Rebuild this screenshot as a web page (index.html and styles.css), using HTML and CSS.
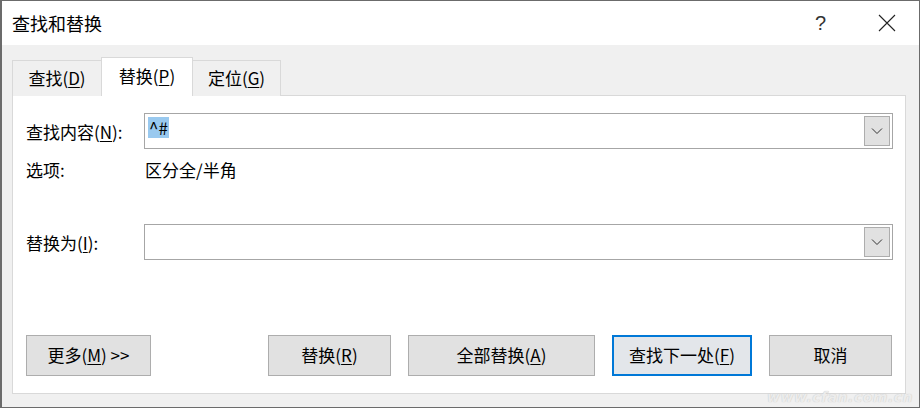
FILE: index.html
```html
<!DOCTYPE html>
<html lang="zh-CN">
  <head>
    <meta charset="UTF-8" />
    <title>查找和替换</title>
    <link rel="stylesheet" href="styles.css">
  </head>
  <body>
    <div class="dialog">
      <div class="titlebar">
        <span class="title">查找和替换</span>
        <span class="help">?</span>
        <span class="close">
          <svg width="18" height="18" viewBox="0 0 18 18"><path d="M1 1 L17 17 M17 1 L1 17" stroke="#222" stroke-width="1.1" fill="none"/></svg>
        </span>
      </div>
      <div class="client">
        <div class="tabs">
          <div class="tab">查找(<u>D</u>)</div>
          <div class="tab active">替换(<u>P</u>)</div>
          <div class="tab">定位(<u>G</u>)</div>
        </div>
        <div class="panel">
          <div class="row">
            <label class="label">查找内容(<u>N</u>):</label>
            <div class="combo">
              <span class="value"><span class="sel">^#</span></span>
              <span class="drop">
                <svg width="12" height="8" viewBox="0 0 12 8"><path d="M1 1.5 L6 6.5 L11 1.5" stroke="#333" stroke-width="1" fill="none"/></svg>
              </span>
            </div>
          </div>
          <div class="row options">
            <span class="label">选项:</span>
            <span class="opt-value">区分全/半角</span>
          </div>
          <div class="row replace">
            <label class="label">替换为(<u>I</u>):</label>
            <div class="combo">
              <span class="value"></span>
              <span class="drop">
                <svg width="12" height="8" viewBox="0 0 12 8"><path d="M1 1.5 L6 6.5 L11 1.5" stroke="#333" stroke-width="1" fill="none"/></svg>
              </span>
            </div>
          </div>
          <div class="buttons">
            <button class="btn more">更多(<u>M</u>) &gt;&gt;</button>
            <span class="spacer"></span>
            <button class="btn w123">替换(<u>R</u>)</button>
            <button class="btn wide">全部替换(<u>A</u>)</button>
            <button class="btn default">查找下一处(<u>F</u>)</button>
            <button class="btn w123">取消</button>
          </div>
        </div>
        <div class="watermark">www.cfan.com.cn</div>
      </div>
    </div>
  </body>
</html>
```

FILE: styles.css
```css
body {
  margin: 0;
  width: 920px;
  height: 408px;
  background: #ffffff;
  font-family: "Noto Sans CJK SC", "Noto Sans", sans-serif;
  color: #000;
  overflow: hidden;
}

u {
  text-decoration: underline;
  text-underline-offset: 2px;
  text-decoration-thickness: 1px;
}

.dialog {
  width: 917px;
  height: 406px;
  border: 1px solid #6b6b6b;
  border-left-width: 2px;
  display: flex;
  flex-direction: column;
}

.titlebar {
  height: 44px;
  flex-shrink: 0;
  background: #ffffff;
  display: flex;
  align-items: center;
  padding-left: 10px;
}

.title {
  font-size: 18px;
  flex: 1;
}

.help {
  font-size: 20px;
  font-family: "Liberation Sans", sans-serif;
  color: #333;
  margin-right: 52px;
}

.close {
  display: flex;
  margin-right: 23px;
}

.client {
  flex: 1;
  background: #f0f0f0;
  padding: 13px 11px 0 10px;
  position: relative;
}

.tabs {
  display: flex;
  align-items: flex-end;
  height: 38px;
  position: relative;
  z-index: 2;
  margin-bottom: -1px;
}

.tab {
  height: 36px;
  padding-bottom: 3px;
  box-sizing: border-box;
  border: 1px solid #d9d9d9;
  border-bottom: none;
  background: #f0f0f0;
  font-size: 17px;
  display: flex;
  align-items: center;
  justify-content: center;
}

.tab:first-child {
  width: 90px;
}

.tab:last-child {
  width: 88px;
  border-left: none;
}

.tab.active {
  width: 92px;
  height: 39px;
  background: #ffffff;
  margin-left: -1px;
  padding-bottom: 4px;
}

.panel {
  width: 894px;
  height: 299px;
  box-sizing: border-box;
  background: #ffffff;
  border: 1px solid #d9d9d9;
  padding: 17px 12px 0 13px;
  display: flex;
  flex-direction: column;
}

.row {
  display: flex;
  align-items: center;
  height: 36px;
  font-size: 17px;
}

.label {
  width: 118px;
  flex-shrink: 0;
}

.combo {
  flex: 1;
  height: 36px;
  box-sizing: border-box;
  border: 1px solid #a6a6a6;
  display: flex;
  align-items: center;
  padding: 2px;
}

.value {
  flex: 1;
  padding-left: 1px;
  display: flex;
  align-items: center;
  height: 100%;
}

.sel {
  background: #99c9ef;
  padding: 0 1px;
  line-height: 21px;
  margin-top: -8px;
  font-size: 17px;
}

.drop {
  width: 26px;
  height: 30px;
  box-sizing: border-box;
  background: #e1e1e1;
  border: 1px solid #adadad;
  display: flex;
  align-items: center;
  justify-content: center;
}

.options {
  height: 24px;
  margin-top: 8px;
}

.opt-value {
  margin-left: 1px;
}

.replace {
  margin-top: 43px;
}

.buttons {
  display: flex;
  margin-top: 75px;
  gap: 17px;
}

.spacer {
  width: 83px;
  flex-shrink: 0;
}

.btn {
  height: 41px;
  flex-shrink: 0;
  box-sizing: border-box;
  background: #e1e1e1;
  border: 1px solid #adadad;
  font-family: "Noto Sans CJK SC", "Noto Sans", sans-serif;
  font-size: 17px;
  color: #000;
  padding: 0 0 2px;
}

.btn.more {
  width: 125px;
}

.btn.w123 {
  width: 123px;
}

.btn.wide {
  width: 187px;
}

.btn.default {
  width: 140px;
  border: 2px solid #0078d7;
  background: #e3e6ea;
}

.watermark {
  position: absolute;
  right: 6px;
  bottom: 2px;
  font-family: "DejaVu Sans", sans-serif;
  font-style: italic;
  font-weight: bold;
  font-size: 14px;
  color: #ececec;
  text-shadow: 0 0 1px #bdbdbd;
  letter-spacing: 0.5px;
}
```
